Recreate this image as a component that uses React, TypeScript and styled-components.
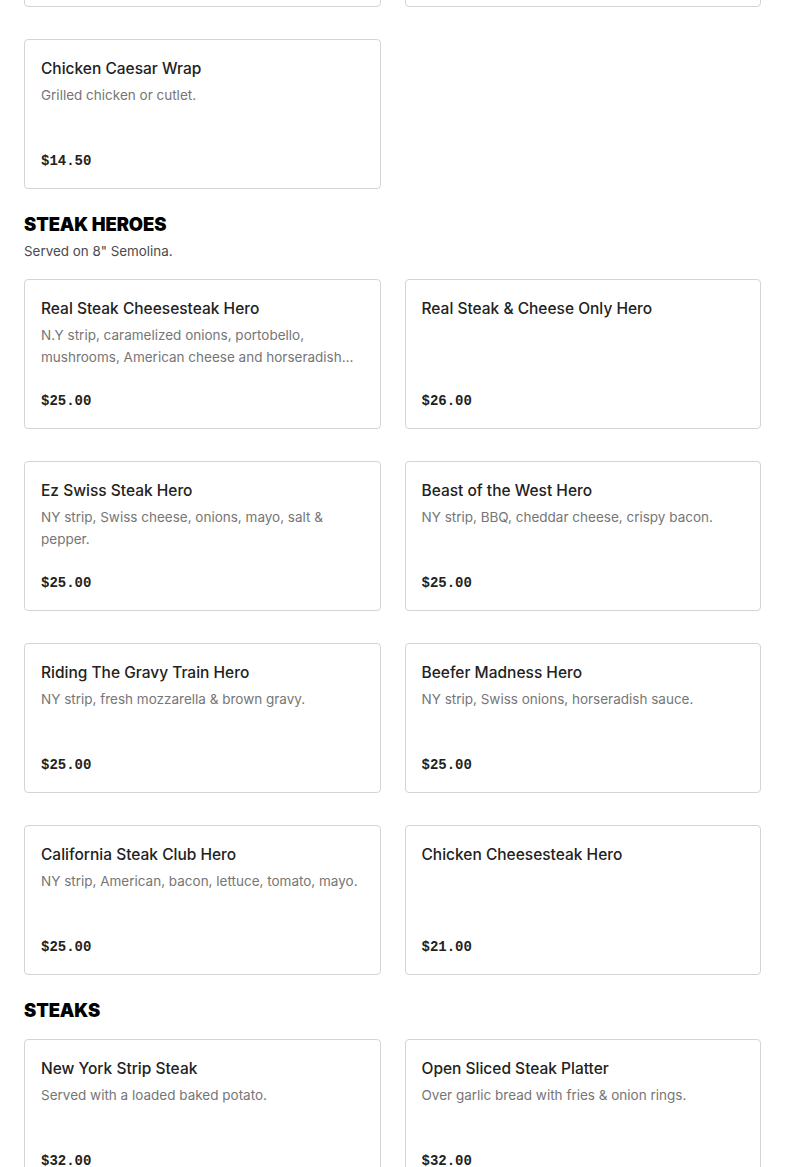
import React from "react";
import styled, { createGlobalStyle } from "styled-components";

const Global = createGlobalStyle`
  html, body { margin: 0; padding: 0; background: #fff; }
  body { font-family: Inter, "Noto Sans", sans-serif; color: #222; overflow: hidden; }
`;

const Page = styled.main`
  padding: 0 24px;
  margin-top: -143px;
  display: flex;
  flex-direction: column;
`;

const Section = styled.section<{ $first?: boolean }>`
  display: flex;
  flex-direction: column;
  margin-top: ${(p) => (p.$first ? "0" : "21px")};
`;

const Heading = styled.h2`
  margin: 0;
  font-family: Inter, sans-serif;
  font-weight: 900;
  font-size: 18.4px;
  line-height: 28px;
  letter-spacing: -0.1px;
  color: #000;
  text-transform: uppercase;
`;

const SubTitle = styled.p`
  margin: 3px 0 0;
  font-size: 13.4px;
  line-height: 20px;
  color: #4a4a4a;
`;

const Grid = styled.div<{ $top: number }>`
  display: grid;
  grid-template-columns: 1fr 1fr;
  column-gap: 24px;
  row-gap: 32px;
  margin-top: ${(p) => p.$top}px;
`;

const Card = styled.article`
  box-sizing: border-box;
  height: 150px;
  border: 1px solid #d4d4d4;
  border-radius: 4px;
  padding: 17px 16px 16px;
  display: flex;
  flex-direction: column;
  background: #fff;
`;

const Title = styled.h3`
  margin: 0;
  font-size: 15.5px;
  font-weight: 500;
  line-height: 24px;
  color: #222;
`;

const Desc = styled.p`
  margin: 3px 0 0;
  font-size: 13.5px;
  line-height: 22px;
  color: #767676;
  display: -webkit-box;
  -webkit-line-clamp: 2;
  -webkit-box-orient: vertical;
  overflow: hidden;
`;

const Price = styled.div`
  margin-top: auto;
  font-family: "Liberation Mono", "DejaVu Sans Mono", monospace;
  font-weight: 700;
  font-size: 14px;
  line-height: 22px;
  color: #222;
`;

type Item = { name: string; desc?: string; price: string };

const MenuCard = ({ item }: { item: Item }) => (
  <Card>
    <Title>{item.name}</Title>
    {item.desc && <Desc>{item.desc}</Desc>}
    <Price>{item.price}</Price>
  </Card>
);

const wrapsPrev: Item[] = [
  { name: "Buffalo Chicken Wrap", desc: "Crispy chicken, buffalo sauce.", price: "$14.50" },
  { name: "Grilled Chicken Wrap", desc: "Lettuce, tomato, mayo.", price: "$14.50" },
  { name: "Chicken Caesar Wrap", desc: "Grilled chicken or cutlet.", price: "$14.50" },
];

const heroes: Item[] = [
  {
    name: "Real Steak Cheesesteak Hero",
    desc: "N.Y strip, caramelized onions, portobello, mushrooms, American cheese and horseradish sauce.",
    price: "$25.00",
  },
  { name: "Real Steak & Cheese Only Hero", price: "$26.00" },
  { name: "Ez Swiss Steak Hero", desc: "NY strip, Swiss cheese, onions, mayo, salt & pepper.", price: "$25.00" },
  { name: "Beast of the West Hero", desc: "NY strip, BBQ, cheddar cheese, crispy bacon.", price: "$25.00" },
  { name: "Riding The Gravy Train Hero", desc: "NY strip, fresh mozzarella & brown gravy.", price: "$25.00" },
  { name: "Beefer Madness Hero", desc: "NY strip, Swiss onions, horseradish sauce.", price: "$25.00" },
  { name: "California Steak Club Hero", desc: "NY strip, American, bacon, lettuce, tomato, mayo.", price: "$25.00" },
  { name: "Chicken Cheesesteak Hero", price: "$21.00" },
];

const steaks: Item[] = [
  { name: "New York Strip Steak", desc: "Served with a loaded baked potato.", price: "$32.00" },
  { name: "Open Sliced Steak Platter", desc: "Over garlic bread with fries & onion rings.", price: "$32.00" },
];

export default function App() {
  return (
    <>
      <Global />
      <Page>
        <Section $first>
          <Grid $top={0}>
            {wrapsPrev.map((it) => (
              <MenuCard key={it.name} item={it} />
            ))}
          </Grid>
        </Section>
        <Section>
          <Heading>Steak Heroes</Heading>
          <SubTitle>Served on 8" Semolina.</SubTitle>
          <Grid $top={18}>
            {heroes.map((it) => (
              <MenuCard key={it.name} item={it} />
            ))}
          </Grid>
        </Section>
        <Section>
          <Heading>Steaks</Heading>
          <Grid $top={15}>
            {steaks.map((it) => (
              <MenuCard key={it.name} item={it} />
            ))}
          </Grid>
        </Section>
      </Page>
    </>
  );
}
